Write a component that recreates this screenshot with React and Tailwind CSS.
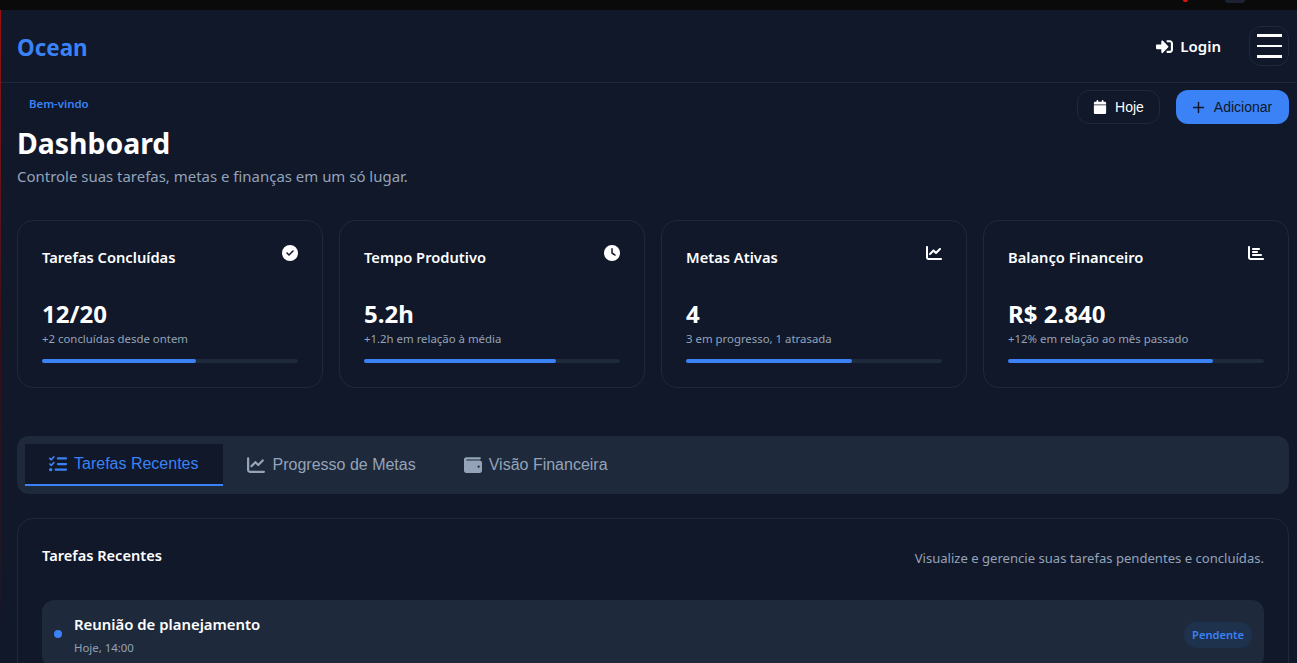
import { FaSignInAlt } from "react-icons/fa";
import { FaCircleCheck, FaClock, FaChartLine, FaChartBar, FaCalendar, FaListCheck, FaWallet } from "react-icons/fa6";
import { LuPlus } from "react-icons/lu";

const sans = "font-['Noto_Sans',sans-serif]";
const arial = "font-['Liberation_Sans',sans-serif]";

const stats = [
  { title: "Tarefas Concluídas", value: "12/20", note: "+2 concluídas desde ontem", pct: "60%", Icon: FaCircleCheck },
  { title: "Tempo Produtivo", value: "5.2h", note: "+1.2h em relação à média", pct: "75%", Icon: FaClock },
  { title: "Metas Ativas", value: "4", note: "3 em progresso, 1 atrasada", pct: "65%", Icon: FaChartLine },
  { title: "Balanço Financeiro", value: "R$ 2.840", note: "+12% em relação ao mês passado", pct: "80%", Icon: FaChartBar },
];

const tabs = [
  { label: "Tarefas Recentes", Icon: FaListCheck, active: true, gap: "gap-[7px]" },
  { label: "Progresso de Metas", Icon: FaChartLine, gap: "gap-2" },
  { label: "Visão Financeira", Icon: FaWallet, gap: "gap-[7px]" },
];

function StatCard({ title, value, note, pct, Icon }) {
  return (
    <div className="h-[168px] rounded-2xl border border-[#1e293b] px-6 pt-6">
      <div className="flex items-start justify-between">
        <h3 className="mt-px text-[14.7px] leading-[22px] font-semibold text-white">{title}</h3>
        <Icon className="h-4 w-4 text-white" />
      </div>
      <div className="mt-[30px] text-2xl leading-[32px] font-bold text-white">{value}</div>
      <p className="mt-[1px] text-[11.4px] leading-[16px] text-[#94a3b8]">{note}</p>
      <div className="mt-[12px] h-1 rounded-full bg-[#1e293b]">
        <div className="h-1 rounded-full bg-[#3b82f6]" style={{ width: pct }} />
      </div>
    </div>
  );
}

export default function App() {
  return (
    <div className={`h-[663px] overflow-hidden bg-[#10182a] ${sans}`}>
      <div className="relative h-[10px] bg-[#0a0a0a]">
        <span className="absolute top-0 left-[1183px] h-[2px] w-[5px] rounded-b-full bg-[#e01010]" />
        <span className="absolute top-0 left-[1225px] h-[3px] w-[20px] rounded-b-md bg-[#1c2233]" />
      </div>
      <div className="flex h-[653px]">
        <div className="w-px shrink-0 bg-gradient-to-b from-[#9b1010] via-[#3a0f18] to-[#10182a]" />
        <div className="min-w-0 flex-1">
          <header className="flex h-[73px] items-center justify-between border-b border-[#1e293b] pr-2 pl-4">
            <span className="mt-1 text-[22.4px] font-bold text-[#3b82f6]">Ocean</span>
            <div className="flex items-center gap-[28px]">
              <button className="flex items-center gap-[7px] text-[15px] font-semibold text-white">
                <FaSignInAlt className="h-[17px] w-[17px]" />
                Login
              </button>
              <button className="flex h-10 w-10 flex-col items-center justify-center gap-2 rounded-xl border border-[#1e293b]">
                <span className="h-[2.5px] w-[25px] bg-white" />
                <span className="h-[2.5px] w-[25px] bg-white" />
                <span className="h-[2.5px] w-[25px] bg-white" />
              </button>
            </div>
          </header>

          <main className="pr-2 pl-4">
            <section className="flex h-[137px] items-start justify-between">
              <div>
                <div className="mt-[12px] pl-3 text-[11.4px] leading-[18px] font-semibold text-[#3b82f6]">Bem-vindo</div>
                <h1 className="mt-[10px] text-[28.4px] leading-[40px] font-bold text-white">Dashboard</h1>
                <p className="mt-[1px] text-[14.96px] leading-[24px] text-[#94a3b8]">Controle suas tarefas, metas e finanças em um só lugar.</p>
              </div>
              <div className={`mt-[7px] flex gap-4 ${arial}`}>
                <button className="flex h-[34px] w-[83px] items-center justify-center gap-2 rounded-xl border border-[#1e293b] text-sm text-white">
                  <FaCalendar className="h-[14px] w-[14px]" />
                  Hoje
                </button>
                <button className="flex h-[34px] w-[113px] items-center justify-center gap-[7px] rounded-xl bg-[#3b82f6] pr-[3px] text-sm text-[#0f172a]">
                  <LuPlus className="h-[17px] w-[17px]" />
                  Adicionar
                </button>
              </div>
            </section>

            <section className="grid grid-cols-4 gap-4">
              {stats.map((s) => (
                <StatCard key={s.title} {...s} />
              ))}
            </section>

            <nav className={`mt-[48px] flex h-[58px] items-start rounded-xl bg-[#1e293b] px-2 pt-2 ${arial}`}>
              {tabs.map(({ label, Icon, active, gap }) => (
                <div
                  key={label}
                  className={`flex h-[42px] items-center px-6 text-base ${gap} ${
                    active ? "border-b-2 border-[#3b82f6] bg-[#10182a] text-[#3b82f6]" : "text-[#94a3b8]"
                  }`}
                >
                  <Icon className="h-[18px] w-[18px]" />
                  {label}
                </div>
              ))}
            </nav>

            <section className="mt-6 h-[300px] rounded-2xl border border-[#1e293b] px-6 pt-6">
              <div className="flex items-start justify-between">
                <h2 className="text-[14.6px] leading-[24px] font-semibold text-white">Tarefas Recentes</h2>
                <p className="mt-[3px] text-[13.08px] leading-[24px] text-[#94a3b8]">Visualize e gerencie suas tarefas pendentes e concluídas.</p>
              </div>
              <div className="mt-[30px] flex h-[68px] items-center justify-between rounded-xl bg-[#1e293b] px-3">
                <div className="flex items-center gap-3">
                  <span className="h-2 w-2 rounded-full bg-[#3b82f6]" />
                  <div className="pt-[2px]">
                    <div className="-mt-[2px] text-[14.9px] leading-[22px] font-semibold text-white">Reunião de planejamento</div>
                    <div className="mt-[5px] text-[11.4px] leading-[16px] text-[#94a3b8]">Hoje, 14:00</div>
                  </div>
                </div>
                <span className="mt-px rounded-full bg-[#1e3a5f]/50 px-2 py-[5px] text-[11.1px] leading-[16px] font-semibold text-[#3b82f6]">Pendente</span>
              </div>
            </section>
          </main>
        </div>
      </div>
    </div>
  );
}
